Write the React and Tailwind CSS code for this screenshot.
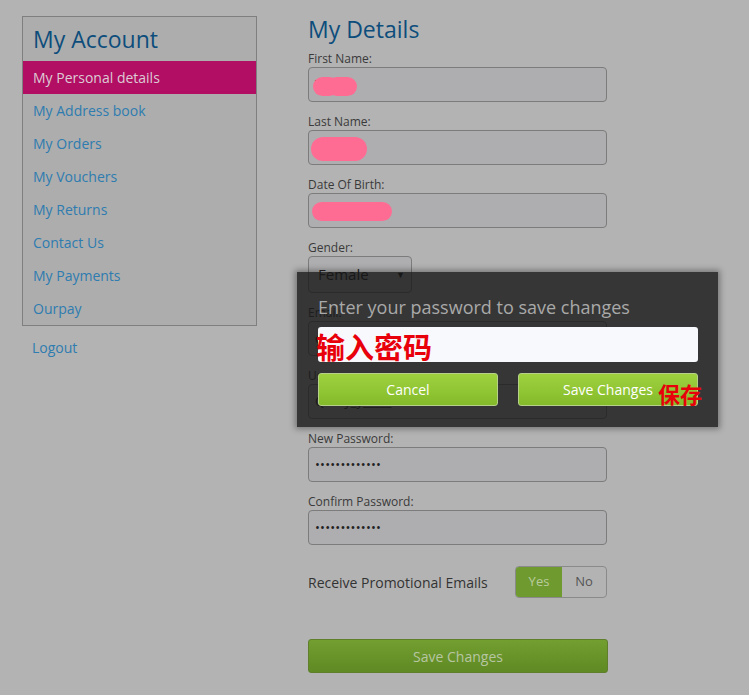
import React from "react";

const font = { fontFamily: '"Open Sans", "Noto Sans", sans-serif' };

function Label({ children }) {
  return <div className="text-[12px] leading-4 text-[#3a3a3a] pt-[1px]">{children}</div>;
}

function Field({ label, children, mb = "mb-[11px]" }) {
  return (
    <div className={mb}>
      <Label>{label}</Label>
      {children}
    </div>
  );
}

function Input({ children }) {
  return (
    <div className="relative h-[35px] w-[299px] rounded-[4px] border border-[#7c7c7c] bg-[#aeaeb0] px-[6px] flex items-center text-[13px] text-[#2a2a2a]">
      {children}
    </div>
  );
}

function Blob({ className }) {
  return <div className={"absolute bg-[#ff6c93] rounded-full " + className} />;
}

const items = [
  "My Address book",
  "My Orders",
  "My Vouchers",
  "My Returns",
  "Contact Us",
  "My Payments",
  "Ourpay",
];

export default function App() {
  return (
    <div style={font} className="relative w-[749px] h-[695px] bg-[#b3b3b3] overflow-hidden">
      <div className="flex pt-4 pl-[22px]">
        {/* Sidebar */}
        <div className="w-[235px] shrink-0">
          <div className="border border-[#7f7f7f] bg-[#adadad]">
            <div className="h-[44px] pl-[10px] flex items-center text-[23px] text-[#0d4d7c] pt-[1px]">My Account</div>
            <div className="h-[33px] pl-[10px] flex items-center bg-[#b20e63] text-[14px] text-[#dccbd5]">
              My Personal details
            </div>
            {items.map((t) => (
              <div key={t} className="h-[33px] pl-[10px] flex items-center text-[14px] text-[#2e7cb0]">
                {t}
              </div>
            ))}
          </div>
          <div className="pl-[10px] mt-[11px] text-[14px] text-[#2e7cb0]">Logout</div>
        </div>

        {/* Form */}
        <div className="ml-[51px] w-[300px]">
          <div className="text-[23px] leading-[30px] text-[#0d4d7c] -mt-[2px] mb-[6px]">My Details</div>
          <Field label="First Name:">
            <Input>
              <span>T</span>
              <Blob className="left-[4px] top-[9px] w-[26px] h-[19px]" />
              <Blob className="left-[18px] top-[9px] w-[30px] h-[19px]" />
            </Input>
          </Field>
          <Field label="Last Name:">
            <Input>
              <span>R</span>
              <Blob className="left-[2px] top-[6px] w-[56px] h-[24px]" />
            </Input>
          </Field>
          <Field label="Date Of Birth:">
            <Input>
              <span>2</span>
              <Blob className="left-[3px] top-[8px] w-[80px] h-[19px]" />
            </Input>
          </Field>
          <Field label="Gender:" mb="mb-[11px]">
            <div className="h-[37px] w-[104px] rounded-[4px] border border-[#7c7c7c] bg-[#aeaeb0] flex items-center justify-between pl-[9px] pr-[6px] text-[15px] text-[#222]">
              <span>Female</span>
              <span className="text-[9px]">▼</span>
            </div>
          </Field>
          <Field label="Email:">
            <Input>
              <span>c</span>
            </Input>
          </Field>
          <Field label="Username:">
            <Input>
              <span>Qonly_y_____</span>
            </Input>
          </Field>
          <Field label="New Password:">
            <Input>
              <span className="text-[13px] tracking-[0.2px] text-[#222]">•••••••••••••</span>
            </Input>
          </Field>
          <Field label="Confirm Password:" mb="mb-[21px]">
            <Input>
              <span className="text-[13px] tracking-[0.2px] text-[#222]">•••••••••••••</span>
            </Input>
          </Field>
          <div className="flex items-center justify-between w-[299px]">
            <span className="text-[14px] text-[#333]">Receive Promotional Emails</span>
            <div className="flex h-[32px] w-[92px] rounded-[4px] border border-[#8a8a8a] overflow-hidden text-[13px]">
              <div className="w-[46px] bg-[#6f9a30] text-[#b9cc9e] flex items-center justify-center">Yes</div>
              <div className="flex-1 flex items-center justify-center text-[#555]">No</div>
            </div>
          </div>
          <div className="mt-[41px] h-[34px] w-[300px] rounded-[3px] border border-[#5f7f2c] bg-gradient-to-b from-[#739e30] to-[#5f8a24] flex items-center justify-center text-[14px] text-[#b6c6a2]">
            Save Changes
          </div>
        </div>
      </div>

      {/* Modal */}
      <div className="absolute left-[297px] top-[272px] w-[421px] h-[155px] bg-[rgba(22,22,22,0.8)] shadow-[0_0_6px_2px_rgba(0,0,0,0.35)] pt-[23px] pl-[21px] pr-[20px]">
        <div className="text-[18px] leading-6 text-[#a9a9a9] whitespace-nowrap">Enter your password to save changes</div>
        <div className="mt-[8px] h-[35px] w-[380px] rounded-[3px] bg-[#f8f9fd]" />
        <div className="mt-[11px] flex gap-[20px]">
          <div className="h-[33px] w-[180px] rounded-[3px] border border-[#b6d08a] bg-gradient-to-b from-[#9fd13e] to-[#84bb2a] flex items-center justify-center text-[14px] text-white">
            Cancel
          </div>
          <div className="h-[33px] w-[180px] rounded-[3px] border border-[#b6d08a] bg-gradient-to-b from-[#9fd13e] to-[#84bb2a] flex items-center justify-center text-[14px] text-white">
            Save Changes
          </div>
        </div>
      </div>

      {/* Annotations */}
      <div
        className="absolute left-[316px] top-[328px] text-[29px] leading-[36px] font-bold text-[#e8000b]"
        style={{ fontFamily: '"Noto Sans CJK SC", sans-serif' }}
      >
        输入密码
      </div>
      <div
        className="absolute left-[658px] top-[378px] text-[22px] leading-[30px] font-bold text-[#e8000b]"
        style={{ fontFamily: '"Noto Sans CJK SC", sans-serif' }}
      >
        保存
      </div>
    </div>
  );
}
